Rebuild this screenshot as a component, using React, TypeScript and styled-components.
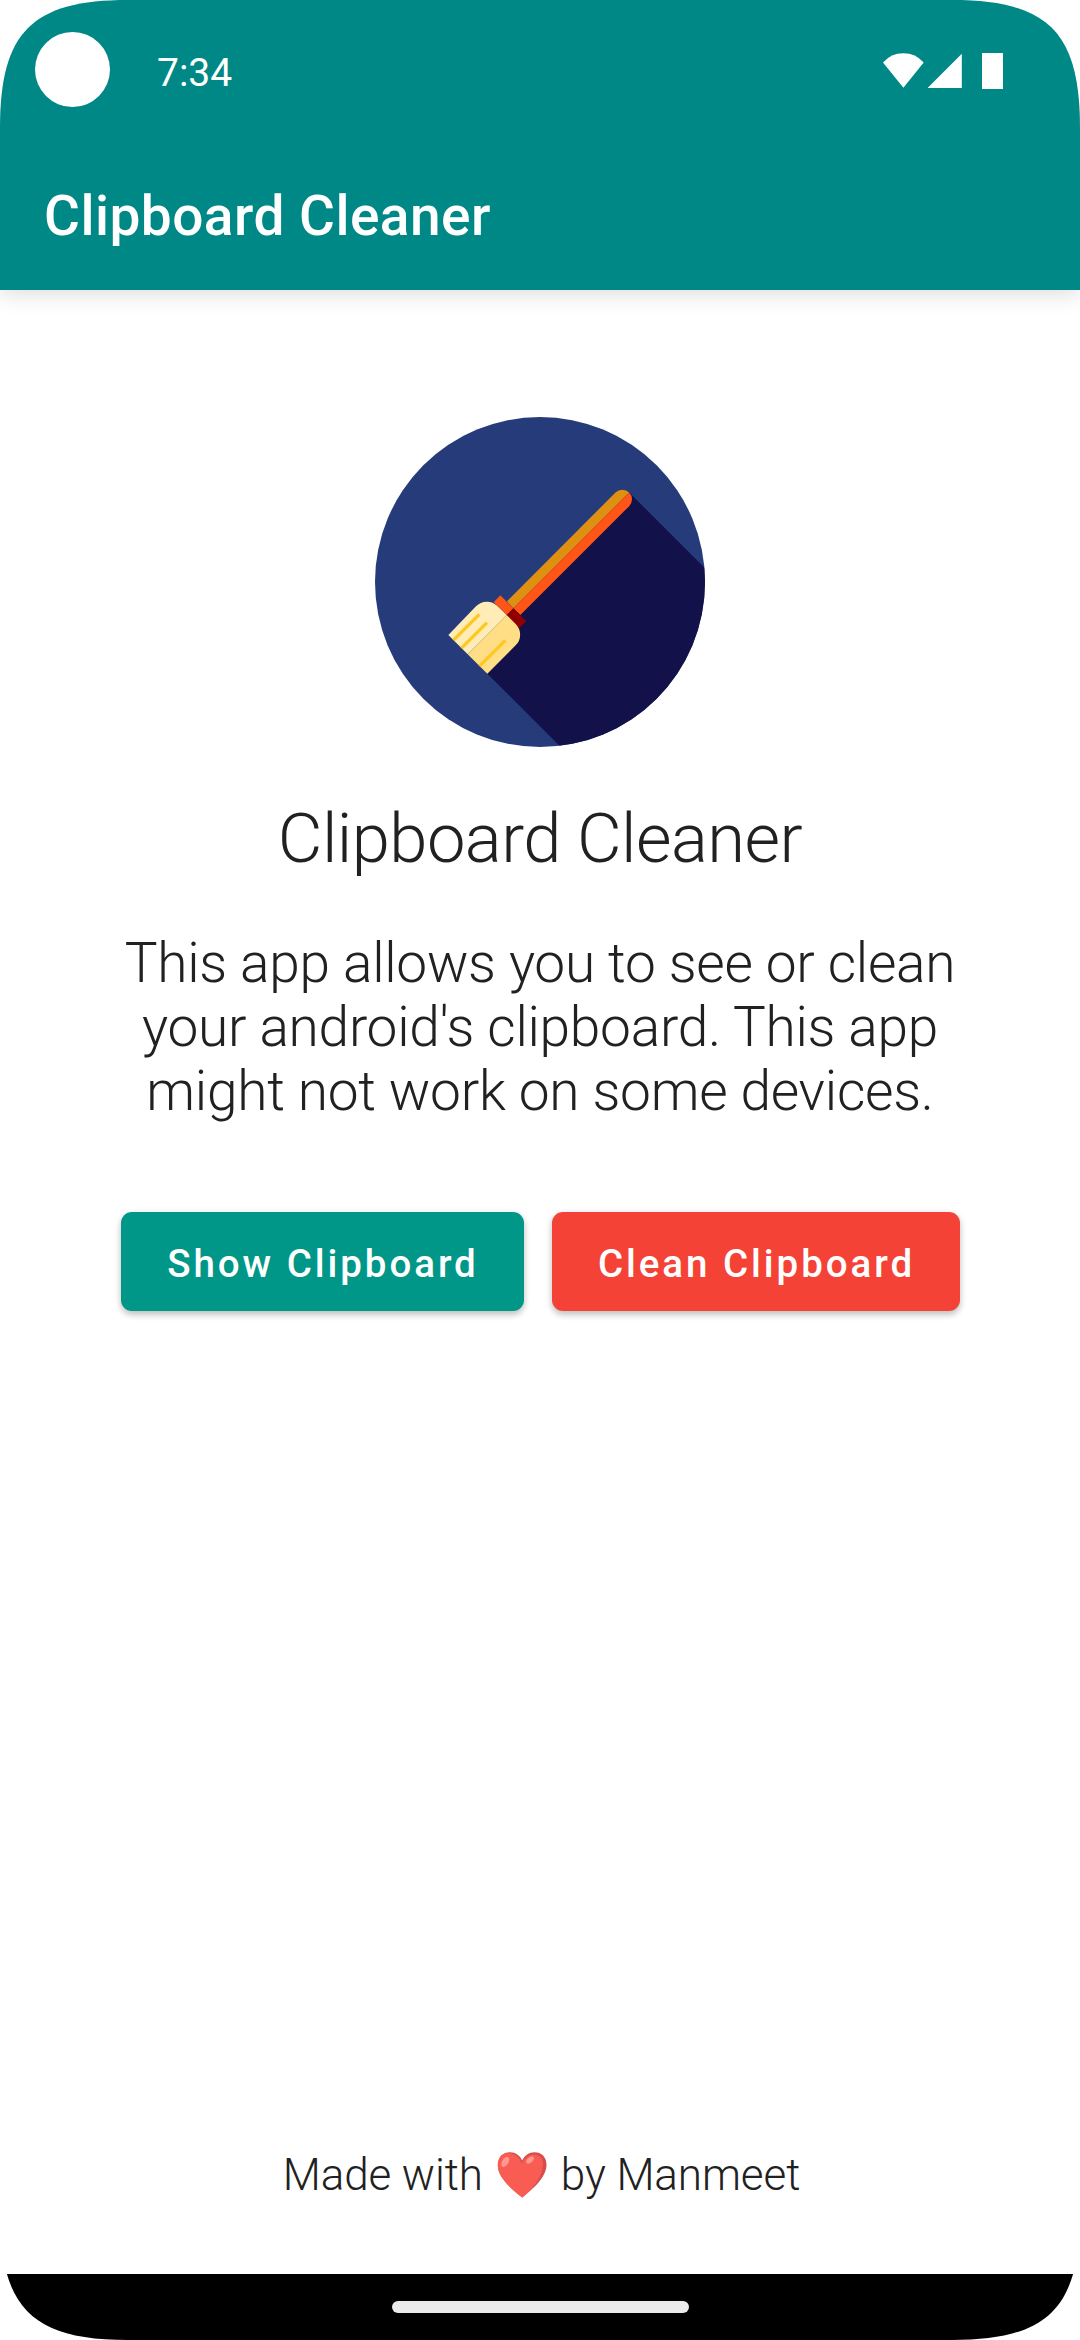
import React from "react";
import styled, { createGlobalStyle } from "styled-components";

const GlobalStyle = createGlobalStyle`
  * { box-sizing: border-box; }
  html, body { margin: 0; background: #fff; }
  body { font-family: Roboto, "Noto Sans", sans-serif; }
`;

const Screen = styled.div`
  width: 1080px;
  height: 2340px;
  display: flex;
  flex-direction: column;
  overflow: hidden;
  background: #fff;
  color: #212121;
  clip-path: path("M0 128 C0 32 32 0 128 0 H952 C1048 0 1080 32 1080 128 V2212 C1080 2308 1048 2340 952 2340 H128 C32 2340 0 2308 0 2212 Z");
`;

const Header = styled.header`
  flex: none;
  height: 290px;
  background: #008886;
  color: #fff;
  box-shadow: 0 3px 22px rgba(0, 0, 0, 0.15);
`;

const StatusBar = styled.div`
  height: 136px;
  display: flex;
  padding: 32px 77px 0 35px;
`;

const CameraHole = styled.div`
  width: 75px;
  height: 75px;
  border-radius: 50%;
  background: #fff;
`;

const Clock = styled.time`
  margin: 18px 0 0 47px;
  font-size: 39px;
  line-height: 46px;
`;

const StatusIcons = styled.svg`
  width: 122px;
  height: 40px;
  margin: 20px 0 0 auto;
  fill: #fff;
`;

const Toolbar = styled.div`
  height: 154px;
  display: flex;
  align-items: center;
  padding: 6px 44px 0;
`;

const ToolbarTitle = styled.h1`
  margin: 0;
  font-size: 55px;
  font-weight: 500;
  line-height: 64px;
  letter-spacing: 0.48px;
`;

const Content = styled.main`
  flex: 1;
  display: flex;
  flex-direction: column;
  align-items: center;
  padding-top: 127px;
`;

const Logo = styled.svg`
  display: block;
  width: 330px;
  height: 330px;
`;

const AppName = styled.h2`
  margin: 52px 0 0;
  font-size: 68.75px;
  font-weight: 300;
  line-height: 80px;
  letter-spacing: -0.55px;
`;

const Description = styled.p`
  width: 860px;
  margin: 52px 0 0;
  font-size: 55px;
  font-weight: 300;
  line-height: 64px;
  letter-spacing: -0.26px;
  text-align: center;
`;

const Actions = styled.div`
  display: flex;
  gap: 28px;
  margin-top: 89px;
  padding-left: 1px;
`;

const ActionButton = styled.button<{ $width: number; $color: string }>`
  width: ${(p) => p.$width}px;
  height: 99px;
  padding: 4px 0 0 1px;
  border: 0;
  border-radius: 11px;
  background: ${(p) => p.$color};
  color: #fff;
  font: 500 38.5px/46px Roboto, "Noto Sans", sans-serif;
  letter-spacing: 0.0765em;
  white-space: nowrap;
  box-shadow: 0 4px 6px rgba(0, 0, 0, 0.2), 0 1px 8px rgba(0, 0, 0, 0.08);
`;

const Credit = styled.footer`
  display: flex;
  align-items: center;
  justify-content: center;
  margin: auto 0 73px;
  padding-left: 3px;
  font-size: 44px;
  font-weight: 300;
  line-height: 52px;
  letter-spacing: -0.1px;
`;

const Heart = styled.svg`
  width: 50px;
  height: 48px;
  margin: 0 14px 0 14px;
`;

const NavigationBar = styled.nav`
  flex: none;
  height: 66px;
  display: flex;
  justify-content: center;
  padding-top: 27px;
  background: #000;
`;

const HomeHandle = styled.div`
  width: 297px;
  height: 12px;
  border-radius: 6px;
  background: #ebebeb;
`;

const BroomLogo = () => (
  <Logo viewBox="45 51 990 990" aria-hidden="true">
    <defs>
      <clipPath id="disc">
        <circle cx="540" cy="546" r="495" />
      </clipPath>
    </defs>
    <circle cx="540" cy="546" r="495" fill="#263b79" />
    <path clipPath="url(#disc)" d="M807 277L1080 550V1100H661L382 821L440 645Z" fill="#121149" />
    <path d="M441 604L766.5 277.5A29 29 0 0 1 807.5 277.5L460 625Z" fill="#df9012" />
    <path d="M460 625L807.5 277.5A29 29 0 0 1 807.5 318.5L481 645Z" fill="#ff5517" />
    <path d="M421 586L460 625L441 645L401 607Z" fill="#ff5517" />
    <path d="M460 625L499 664L478 685L440 645Z" fill="#900000" />
    <path d="M265 705L348 619A45 45 0 0 1 412 618L440 645L323 763Z" fill="#ffecb6" />
    <path d="M440 645L467 672A45 45 0 0 1 467 736L382 821L323 763Z" fill="#ffde85" />
    <path d="M280.500 720.500L358 643M304.500 744.500L381 668M358.500 798.500L436 721" stroke="#ffc71f" strokeWidth="10" fill="none" />
  </Logo>
);

const HeartIcon = () => (
  <Heart viewBox="0 0 50 48" role="img" aria-label="love">
    <defs>
      <clipPath id="heart-shape">
        <path d="M25.200 46.500C15 38 1 27 .8 14.500C.7 6 6 1.300 13 1.300C18.500 1.300 23 4.500 25.200 9.500C27.500 4.500 32 1.300 37.500 1.300C44.500 1.300 49.500 6 49.500 14C49.300 27 35.500 38 25.200 46.500Z" />
      </clipPath>
    </defs>
    <g clipPath="url(#heart-shape)">
      <rect width="50" height="48" fill="#d64e4c" />
      <path d="M25 48C13 39-2 28-.5 13C1-1 20-2 25 13C28 2 45 0 46 12C46.500 25 36 37 25 48Z" fill="#f85c52" />
    </g>
    <ellipse cx="8.300" cy="10.800" rx="3.200" ry="5.600" transform="rotate(30 8.300 10.800)" fill="#ff988f" />
    <ellipse cx="33" cy="9" rx="4.500" ry="2.600" transform="rotate(-40 33 9)" fill="#ff988f" />
  </Heart>
);

export default function App() {
  return (
    <>
      <GlobalStyle />
      <Screen>
        <Header>
          <StatusBar>
            <CameraHole />
            <Clock>7:34</Clock>
            <StatusIcons viewBox="0 0 122 40">
              <path d="M2 10.500Q10 1.200 22.300 1.200Q34.700 1.200 42.700 10.500L22.400 35.700Z" />
              <path d="M80.800 1.800V36H46.600Z" />
              <path d="M101 1H122V37H101Z" />
            </StatusIcons>
          </StatusBar>
          <Toolbar>
            <ToolbarTitle>Clipboard Cleaner</ToolbarTitle>
          </Toolbar>
        </Header>
        <Content>
          <BroomLogo />
          <AppName>Clipboard Cleaner</AppName>
          <Description>
            This app allows you to see or clean your android's clipboard. This app might not work on some devices.
          </Description>
          <Actions>
            <ActionButton $width={403} $color="#009688">Show Clipboard</ActionButton>
            <ActionButton $width={408} $color="#f44336">Clean Clipboard</ActionButton>
          </Actions>
          <Credit>
            <span>Made with</span>
            <HeartIcon />
            <span>by Manmeet</span>
          </Credit>
        </Content>
        <NavigationBar>
          <HomeHandle />
        </NavigationBar>
      </Screen>
    </>
  );
}
